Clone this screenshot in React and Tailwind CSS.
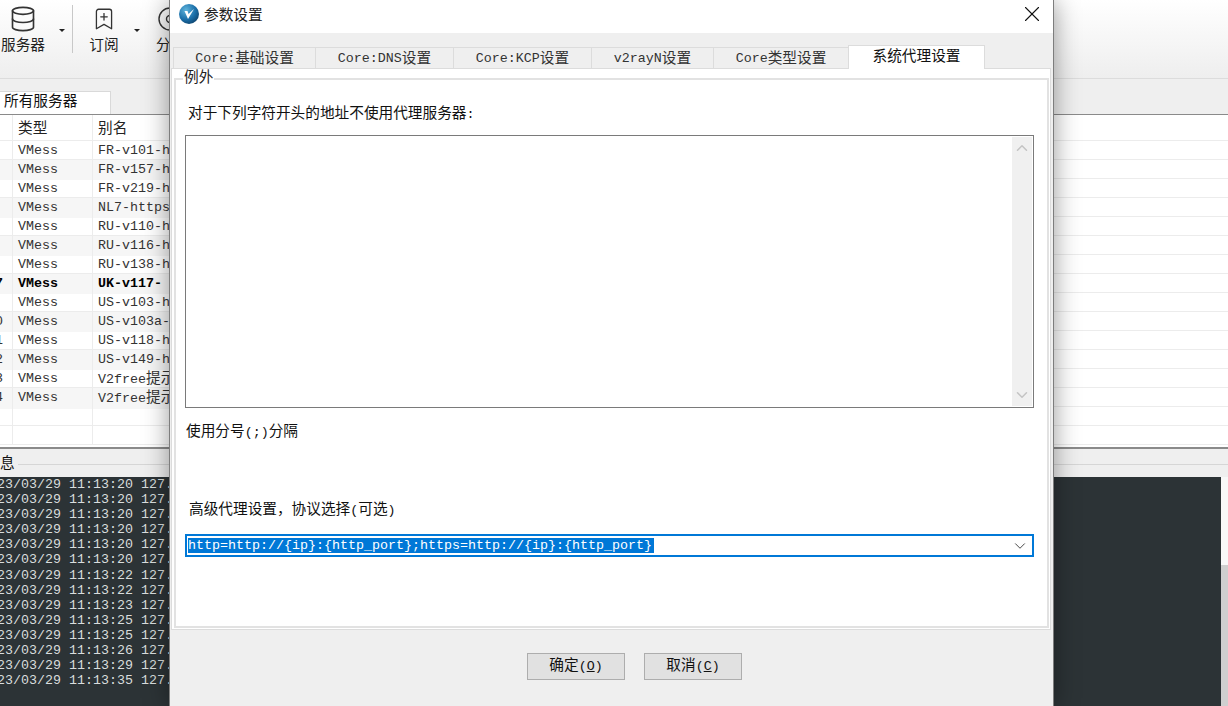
import React from 'react';
import { Database, BookmarkPlus, ChevronUp, ChevronDown, X } from 'lucide-react';

const names = ['FR-v101-h', 'FR-v157-h', 'FR-v219-h', 'NL7-https', 'RU-v110-h', 'RU-v116-h', 'RU-v138-h', 'UK-v117-', 'US-v103-h', 'US-v103a-', 'US-v118-h', 'US-v149-h', 'V2free提示', 'V2free提示'];
const logTimes = ['20', '20', '20', '20', '20', '20', '22', '22', '23', '25', '25', '26', '29', '35'];
const dialogTabs = [
  { label: 'Core:基础设置', width: 'w-[142px]' },
  { label: 'Core:DNS设置', width: 'w-[138px]' },
  { label: 'Core:KCP设置', width: 'w-[138px]' },
  { label: 'v2rayN设置', width: 'w-[122px]' },
  { label: 'Core类型设置', width: 'w-[135px]' },
];

// latin runs stay mono, CJK runs get the slightly larger size
const Txt = ({ children }) => (
  <>
    {String(children).split(/([\u3000-\u9fff\uff00-\uffef]+)/).map((part, index) =>
      index % 2 ? <span key={index} className="text-[14.67px]">{part}</span> : part
    )}
  </>
);

const Caret = () => (
  <div className="w-0 h-0 border-x-[3px] border-x-transparent border-t-[3px] border-t-[#222]" />
);

const ToolButton = ({ icon, label, width }) => (
  <div className={`flex flex-col items-center shrink-0 ${width}`}>
    <div className="h-[30px] flex items-center justify-center">{icon}</div>
    <div className="mt-[3px] leading-[18px] text-[#222]"><Txt>{label}</Txt></div>
  </div>
);

const rowDigit = (index) => {
  if (index === 7) return '7';
  if (index >= 9 && index <= 13) return String(index - 9);
  return null;
};

const Background = () => (
  <div className="flex flex-col h-[706px] bg-[#efefef]">
    <div className="flex h-[79px] pt-[4px] border-b border-[#dcdcdc] bg-gradient-to-b from-white to-[#eeeeee] shrink-0">
      <ToolButton width="w-[46px]" label="服务器" icon={<Database size={28} strokeWidth={1.4} className="text-[#333]" />} />
      <div className="mt-[25px] ml-[13px]"><Caret /></div>
      <div className="w-px h-[48px] mt-[1px] ml-[7px] bg-[#c8c8c8]" />
      <ToolButton width="w-[62px]" label="订阅" icon={<BookmarkPlus size={26} strokeWidth={1.2} className="text-[#333]" />} />
      <div className="mt-[25px] -ml-[1px]"><Caret /></div>
      <div className="ml-[18px] flex flex-col">
        <svg width="24" height="30" viewBox="0 0 24 30" fill="none" stroke="#333" strokeWidth="1.4">
          <circle cx="12" cy="15" r="11" />
          <circle cx="12" cy="15" r="3.5" />
        </svg>
        <div className="mt-[3px] -ml-[2px] leading-[18px] text-[#222]"><Txt>分组</Txt></div>
      </div>
    </div>
    <div className="h-[36px] flex items-end border-b border-[#8a8a8a] shrink-0">
      <div className="w-[111px] h-[23px] bg-white border-r border-t border-[#d9d9d9] pl-[4px] leading-[20px] text-[#111]">
        <Txt>所有服务器</Txt>
      </div>
    </div>
    <div className="h-[332px] bg-white overflow-hidden shrink-0">
      <div className="grid grid-cols-[13px_80px_300px_1fr] h-[26px] text-[#222] leading-[28px] border-b border-[#ececec]">
        <div className="border-r border-[#ececec]" />
        <div className="pl-[5px] border-r border-[#ececec]"><Txt>类型</Txt></div>
        <div className="pl-[5px]"><Txt>别名</Txt></div>
        <div />
      </div>
      {Array.from({ length: 16 }).map((_, index) => {
        const alt = index % 2 === 1 && index < 14 ? 'bg-[#f6f6f6]' : '';
        const bold = index === 7 ? 'font-bold text-black' : 'text-[#333]';
        return (
          <div key={index} className={`grid grid-cols-[13px_80px_300px_1fr] h-[19px] leading-[20px] border-b border-[#ececec] ${bold}`}>
            <div className={`border-r border-[#ececec] overflow-hidden flex justify-end pr-[9px] ${alt}`}>
              {rowDigit(index) && <span className="shrink-0">{rowDigit(index)}</span>}
            </div>
            <div className={`pl-[5px] border-r border-[#ececec] ${alt}`}>{index < 14 ? 'VMess' : ''}</div>
            <div className={`pl-[5px] whitespace-nowrap ${alt}`}>{index < 14 ? <Txt>{names[index]}</Txt> : ''}</div>
            <div />
          </div>
        );
      })}
    </div>
    <div className="h-[30px] border-t-2 border-[#8a8a8a] flex items-center shrink-0 bg-[#efefef]">
      <span className="text-[14.67px] text-[#111] leading-none mt-[2px]">息</span>
      <div className="flex-1 h-px bg-[#d6d6d6] ml-[3px] mt-[3px]" />
    </div>
    <div className="flex flex-1 min-h-0">
      <div className="flex-1 bg-[#2c3336] text-[#d9dddd] overflow-hidden leading-[15.1px] whitespace-nowrap">
        {logTimes.map((sec, index) => (
          <div key={index} className="-ml-[19px]">{`2023/03/29 11:13:${sec} 127.0.0.1`}</div>
        ))}
      </div>
      <div className="w-[7px] flex flex-col bg-[#f8f8f8]">
        <div className="flex-1" />
        <div className="h-[141px] bg-[#cfcfcf]" />
      </div>
    </div>
  </div>
);

const Dialog = () => (
  <div className="absolute left-[169px] top-0 w-[885px] h-[706px] flex flex-col bg-[#efefef] border-x border-[#7d7d7d] shadow-[0_0_24px_rgba(0,0,0,0.4)]">
    <div className="h-[33px] bg-white flex items-center pl-[9px] pr-[8px] shrink-0">
      <svg width="20" height="20" viewBox="0 0 20 20" className="shrink-0 mb-[5px]">
        <defs>
          <radialGradient id="logoBg" cx="35%" cy="30%" r="80%">
            <stop offset="0%" stopColor="#5fb4dc" />
            <stop offset="60%" stopColor="#1a6ea8" />
            <stop offset="100%" stopColor="#0d3f66" />
          </radialGradient>
        </defs>
        <circle cx="10" cy="10" r="10" fill="url(#logoBg)" />
        <path d="M5.5 7 L9 15 L15 5 L9.5 10 L8.5 7 Z" fill="#fff" />
      </svg>
      <span className="ml-[5px] mb-[5px] text-[14.67px] font-['Noto_Sans_CJK_SC',sans-serif] text-[#222]">参数设置</span>
      <X size={26} strokeWidth={1} className="ml-auto mb-[5px] text-[#111]" />
    </div>
    <div className="h-[35px] pl-[3px] flex items-end shrink-0">
      {dialogTabs.map((tab) => (
        <div key={tab.label} className={`h-[21px] flex items-center justify-center border border-b-0 border-r-0 border-[#dcdcdc] text-[#333] leading-none pt-[2px] ${tab.width}`}>
          <Txt>{tab.label}</Txt>
        </div>
      ))}
      <div className="w-[137px] h-[24px] -mb-px relative bg-white border border-b-0 border-[#dcdcdc] flex items-center justify-center text-[14.67px] text-[#111] leading-none">
        系统代理设置
      </div>
    </div>
    <div className="h-[562px] ml-[1px] mr-[2px] bg-white border border-[#dcdcdc] pl-[2px] pr-[1px] shrink-0">
      <fieldset className="h-[558px] border-2 border-[#e2e2e2] mt-[1px] pl-[9px] pr-[13px]">
        <legend className="-ml-[2px] px-[1px] text-[14.67px] leading-[17px] text-[#222]">例外</legend>
        <div className="pl-[3px] mt-[16px] leading-[22px] text-[#111]"><Txt>对于下列字符开头的地址不使用代理服务器:</Txt></div>
        <div className="mt-[9px] h-[273px] border border-[#7a7a7a] bg-white flex justify-end p-px">
          <div className="w-[20px] h-full bg-[#f0f0f0] flex flex-col items-center justify-between py-[2px]">
            <ChevronUp size={18} strokeWidth={2} className="text-[#c4c4c4]" />
            <ChevronDown size={18} strokeWidth={2} className="text-[#c4c4c4]" />
          </div>
        </div>
        <div className="pl-[1px] mt-[14px] leading-[20px] text-[#111]"><Txt>使用分号(;)分隔</Txt></div>
        <div className="pl-[4px] mt-[57px] leading-[20px] text-[#111]"><Txt>{'高级代理设置\uFF0C协议选择(可选)'}</Txt></div>
        <div className="mt-[13px] h-[23px] border-2 border-[#0078d7] bg-white flex items-center pl-[1px] pr-[3px]">
          <span className="bg-[#0078d7] text-white leading-[15px] whitespace-nowrap pr-[2px]">{'http=http://{ip}:{http_port};https=http://{ip}:{http_port}'}</span>
          <ChevronDown size={18} strokeWidth={1.3} className="ml-auto text-[#444]" />
        </div>
      </fieldset>
    </div>
    <div className="flex-1 flex gap-[19px] pt-[23px] pl-[357px]">
      <button className="w-[98px] h-[27px] bg-[#e1e1e1] border border-[#adadad] text-[#111] leading-none"><Txt>确定</Txt>(<u>O</u>)</button>
      <button className="w-[98px] h-[27px] bg-[#e1e1e1] border border-[#adadad] text-[#111] leading-none"><Txt>取消</Txt>(<u>C</u>)</button>
    </div>
  </div>
);

const App = () => (
  <div className="relative w-full h-[706px] overflow-hidden text-[13.33px] font-['Liberation_Mono','Noto_Sans_CJK_SC',monospace]">
    <Background />
    <Dialog />
  </div>
);

export default App;
